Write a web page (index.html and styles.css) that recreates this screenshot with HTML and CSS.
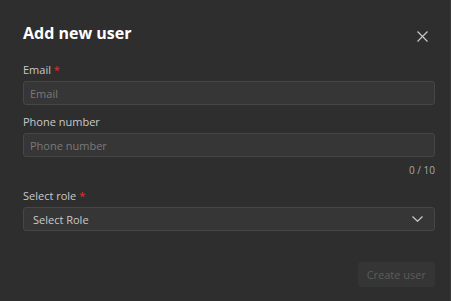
FILE: index.html
```html
<!DOCTYPE html>
<html>
<head>
    <title>Add new user</title>
    <meta name="viewport" content="width=device-width, initial-scale=1.0">
    <link rel="stylesheet" href="styles.css">
</head>
<body>
    <div class="modal">
        <div class="modal-header">
            <h2 class="modal-title">Add new user</h2>
            <button class="close-btn" aria-label="Close">
                <svg width="11" height="11" viewBox="0 0 11 11">
                    <path d="M0.5 0.5L10.5 10.5M10.5 0.5L0.5 10.5" stroke="#c8c8c8" stroke-width="1.2" fill="none"/>
                </svg>
            </button>
        </div>
        <form class="user-form">
            <div class="field">
                <label class="field-label">Email <span class="required">*</span></label>
                <input class="field-input" type="text" placeholder="Email">
            </div>
            <div class="field">
                <label class="field-label">Phone number</label>
                <input class="field-input" type="text" placeholder="Phone number">
                <div class="counter">0 / 10</div>
            </div>
            <div class="field">
                <label class="field-label">Select role <span class="required">*</span></label>
                <div class="select">
                    <span>Select Role</span>
                    <svg width="11" height="6" viewBox="0 0 11 6">
                        <path d="M0.5 0.5L5.5 5.3L10.5 0.5" stroke="#c8c8c8" stroke-width="1.2" fill="none"/>
                    </svg>
                </div>
            </div>
            <div class="actions">
                <button type="button" class="create-btn" disabled>Create user</button>
            </div>
        </form>
    </div>
</body>
</html>
```

FILE: styles.css
```css
html, body {
    margin: 0;
    padding: 0;
    background: #2e2e2e;
}
body {
    font-family: "Open Sans", "Noto Sans", sans-serif;
    color: #c9c9c9;
}
.modal {
    width: 451px;
    height: 301px;
    box-sizing: border-box;
    padding: 22px 15px 0 23px;
    background: #2e2e2e;
    border-right: 1px solid #3a3a3a;
}
.modal-header {
    display: flex;
    justify-content: space-between;
    align-items: center;
    height: 22px;
    margin-bottom: 18px;
}
.modal-title {
    margin: 0;
    font-size: 16px;
    font-weight: 700;
    line-height: 20px;
    color: #ffffff;
}
.close-btn {
    background: none;
    border: none;
    padding: 0;
    width: 11px;
    height: 11px;
    margin: 6px 7px 0 0;
    cursor: pointer;
    display: flex;
}
.user-form {
    display: flex;
    flex-direction: column;
    gap: 9px;
}
.field {
    display: flex;
    flex-direction: column;
}
.field-label {
    font-size: 11px;
    line-height: 16px;
    margin-bottom: 3px;
    color: #c9c9c9;
}
.required {
    color: #e03131;
}
.field-input, .select {
    box-sizing: border-box;
    height: 24px;
    background: #363636;
    border: 1px solid #464646;
    border-radius: 3px;
    font-family: inherit;
    font-size: 11px;
    color: #c9c9c9;
    padding: 0 10px 0 6px;
    outline: none;
    width: 100%;
}
.field-input::placeholder {
    color: #7a7a7a;
}
.select {
    display: flex;
    align-items: center;
    justify-content: space-between;
    padding-left: 9px;
    padding-right: 11px;
}
.counter {
    text-align: right;
    font-size: 10px;
    line-height: 14px;
    margin-top: 6px;
    margin-bottom: 2px;
    color: #a8a8a8;
}
.actions {
    display: flex;
    justify-content: flex-end;
    margin-top: 22px;
}
.create-btn {
    height: 25px;
    padding: 0 9px;
    background: #353535;
    border: none;
    border-radius: 3px;
    font-family: inherit;
    font-size: 11px;
    color: #5c5c5c;
}
```
